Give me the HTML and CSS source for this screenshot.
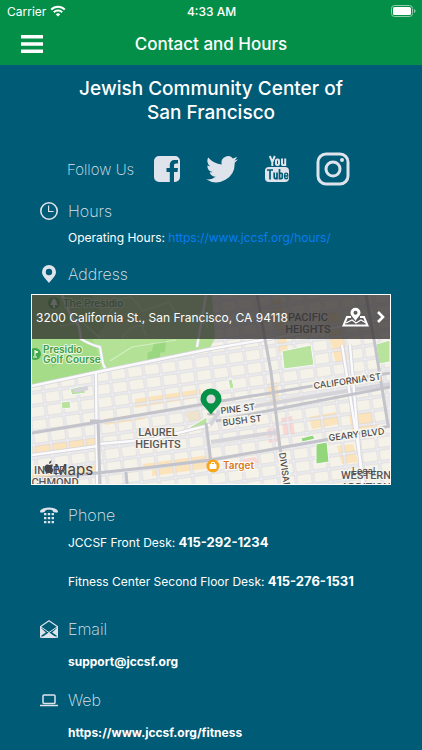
FILE: index.html
```html
<!DOCTYPE html>
<html lang="en">
<head>
    <meta charset="UTF-8">
    <meta name="viewport" content="width=device-width, initial-scale=1.0">
    <title>Contact and Hours</title>
    <link rel="stylesheet" href="styles.css">
</head>
<body>

    <header class="header">
        <div class="status-bar">
            <div class="carrier">
                <span>Carrier</span>
                <svg width="16" height="12" viewBox="0 0 16 12" fill="none" stroke="#fff" stroke-width="2">
                    <path d="M1.2 4.6a9.6 9.6 0 0 1 13.6 0"/>
                    <path d="M3.8 7.3a6 6 0 0 1 8.4 0"/>
                    <path d="M8 11.6L5.8 9.4a3.1 3.1 0 0 1 4.4 0z" fill="#fff" stroke="none"/>
                </svg>
            </div>
            <span class="time">4:33 AM</span>
            <div class="battery">
                <svg width="25" height="12" viewBox="0 0 25 12">
                    <rect x=".5" y=".5" width="21" height="11" rx="3" fill="none" stroke="#8fceab"/>
                    <rect x="2" y="2" width="18" height="8" rx="1.5" fill="#fff"/>
                    <path d="M23 4v4q1.500-.6 1.500-2T23 4z" fill="#8fceab"/>
                </svg>
            </div>
        </div>
        <nav class="nav-bar">
            <button class="menu-btn" aria-label="Menu">
                <svg width="22" height="18" viewBox="0 0 22 18" fill="#fff">
                    <path d="M0 0h22v3.500H0zM0 7.200h22v3.500H0zM0 14.500h22V18H0z"/>
                </svg>
            </button>
            <h1 class="nav-title">Contact and Hours</h1>
        </nav>
    </header>

    <main class="content">
        <h2 class="place-name">Jewish Community Center of San Francisco</h2>

        <div class="follow">
            <span class="label">Follow Us</span>
            <a href="#" aria-label="Facebook">
                <svg width="26" height="26" viewBox="0 0 26 26">
                    <path fill="#dfe3ec" d="M5 0h16a5 5 0 0 1 5 5v16a5 5 0 0 1-5 5h-1V16h3.500l.5-4h-4V9.500c0-1.300.6-2 2-2h2V4h-3c-3.600 0-5.200 2-5.200 5.200V12h-3.300v4h3.300v10H5a5 5 0 0 1-5-5V5a5 5 0 0 1 5-5z"/>
                </svg>
            </a>
            <a href="#" aria-label="Twitter">
                <svg width="32" height="27" viewBox="0 0 24 20">
                    <path fill="#dfe3ec" d="M24 2.400a10 10 0 0 1-2.800.8A4.900 4.900 0 0 0 23.300.5a10 10 0 0 1-3.100 1.200 4.900 4.900 0 0 0-8.400 4.500A14 14 0 0 1 1.700 1a4.900 4.900 0 0 0 1.500 6.600A5 5 0 0 1 1 7a4.900 4.900 0 0 0 3.900 4.900 5 5 0 0 1-2.200.1 4.900 4.900 0 0 0 4.600 3.400A9.900 9.900 0 0 1 0 17.400a14 14 0 0 0 21.500-12.500A10 10 0 0 0 24 2.400z"/>
                </svg>
            </a>
            <a href="#" aria-label="YouTube">
                <svg width="26" height="28" viewBox="0 0 26 28" fill="none" stroke-width="2">
                    <rect x="1" y="12" width="24" height="15" rx="4" fill="#dfe3ec"/>
                    <g stroke="#dfe3ec">
                        <path d="M5.800 1l2.500 6v4M10.800 1L8.300 7"/>
                        <rect x="12" y="4.500" width="3" height="5.600" rx="1.300"/>
                        <path d="M18 3.500v5.200q0 1.500 1.200 1.400 1.200 0 2-1.400M21.200 3.500V11"/>
                    </g>
                    <g stroke="#005b76" stroke-width="1.700">
                        <path d="M3 15h6M6 15v9.500M10.200 17.500v4.800q0 1.300 1 1.300t1.800-1.300M13 17.500v7"/>
                        <path d="M15.500 14v10.500M15.500 19q1-1 2-.7t.8 1.500v2.500q0 1.300-.8 1.400t-2-.8"/>
                        <path d="M20.700 21h3v-1.500q0-1.400-1.500-1.400t-1.500 1.400v2.700q0 1.500 1.500 1.500t1.500-1.500" stroke-width="1.400"/>
                    </g>
                </svg>
            </a>
            <a href="#" aria-label="Instagram">
                <svg width="34" height="34" viewBox="0 0 34 34" fill="none" stroke="#dfe3ec" stroke-width="3">
                    <rect x="2" y="2" width="30" height="30" rx="8"/>
                    <circle cx="17" cy="17" r="7"/>
                    <circle cx="26" cy="8" r="2" fill="#dfe3ec" stroke="none"/>
                </svg>
            </a>
        </div>

        <section class="hours">
            <h3 class="section-title">
                <svg width="18" height="18" viewBox="0 0 18 18" fill="none" stroke="#dfe3ec">
                    <circle cx="9" cy="9" r="8.200" stroke-width="1.600"/>
                    <path d="M8.600 3.500v6h5" stroke-width="1.200"/>
                </svg>
                Hours
            </h3>
            <p class="line">Operating Hours: <a class="hours-link" href="https://www.jccsf.org/hours/">https://www.jccsf.org/hours/</a></p>
        </section>

        <section class="address">
            <h3 class="section-title">
                <svg width="18" height="18" viewBox="0 0 18 18">
                    <path fill="#dfe3ec" fill-rule="evenodd" d="M9 0a7 7 0 0 1 7 7c0 3.500-3 6-7 11C5 13 2 10.500 2 7a7 7 0 0 1 7-7zm0 3.800a3.200 3.200 0 1 0 0 6.400 3.200 3.200 0 0 0 0-6.400z"/>
                </svg>
                Address
            </h3>
            <div class="map">
                <svg class="map-canvas" viewBox="32 295 358 189" preserveAspectRatio="xMidYMid slice">
                    <defs>
                        <pattern id="blocks" width="17" height="13" patternUnits="userSpaceOnUse" patternTransform="translate(97 421) rotate(-8)">
                            <path d="M0 2h17M2 0v13" stroke="#d3d3d8" stroke-width="2.800"/>
                            <path d="M0 2h17M2 0v13" stroke="#f1f1f5" stroke-width="1.400"/>
                        </pattern>
                    </defs>
                    <rect x="32" y="295" width="358" height="189" fill="#f5f2e9"/>

                    <!-- shopping blocks -->
                    <g fill="#fbe3bb">
                        <path d="M32 446l66-10v8l-66 10zM32 474l66-9v7l-66 9zM135 408l66-11v-8l-66 10zM152 470l58-9v7l-58 8zM271 300l10-1 7 52-10 2zM323 312l14-2 13 50-14 4zM309 417l27-5 3 12-27 5zM349 414l22-3 8 18-27 5zM333 340l12-2 4 20-12 2zM337 446l16-2 5 18-16 2zM143 464l66-9 1 5-66 9zM105 425l40-6v-6l-41 6zM267 384l10-2 3 22-9 2z"/>
                    </g>
                    <g fill="#fad6d4">
                        <path d="M281 418l11-2 3 18-11 2zM267 429l11-2 2 14-11 2zM239 460l16-3 5 6-16 2z"/>
                    </g>
                    <path d="M185 413l13-3 6 10-15 2z" fill="#eee3cc"/>

                    <rect x="32" y="295" width="358" height="189" fill="url(#blocks)"/>

                    <!-- parks -->
                    <path d="M32 295h180l3 43-5 10-108 22-22 5-48 10z" fill="#b3e296"/>
                    <path d="M32 338h60l10 25-4 8-66 13z" fill="#a5dc88"/>
                    <path d="M32 295h60l14 28-10 15H32z" fill="#96cf7d"/>
                    <g fill="#9bd680">
                        <path d="M154 343l12-3-1 12-14 2zM148 352l12-2v9l-13 2zM50 350l15 6-13 13z"/>
                    </g>
                    <g fill="#b7e39c" stroke="#f8f8fa">
                        <path d="M282 351l29-6 3 20-30 4zM376 344l14-4v22l-11 2zM228 380l4-1 2 9-4 1zM61 402l9-1 1 7-9 1zM70 389l12-3 4 7-14 2zM190 427l17-10v8l-15 6z"/>
                        <path d="M301 438l12-3 2 4-13 3zM316 444l11-2 2 20-13 2z" fill="#94d77a"/>
                    </g>
                    <g fill="none" stroke="#d3efc2" stroke-width="1.200">
                        <path d="M107 318l10-18 14-3 12 14 26-9 6 10M140 318l6 18M168 300l12 20 20-6 8 14M122 338q8-14 22-12"/>
                        <path d="M110 361l22-14 44-7M100 338l-18-16-22 4"/>
                    </g>
                    <path d="M62 295l8 19 9 12 2 13q10 6 19 8l3 17 3 6M206 295l-9 52" fill="none" stroke="#d9dcdf" stroke-width="3"/>
                    <path d="M62 295l8 19 9 12 2 13q10 6 19 8l3 17 3 6M206 295l-9 52" fill="none" stroke="#fafafc" stroke-width="2"/>

                    <!-- main streets -->
                    <g fill="none" stroke="#d4d4da" stroke-width="4">
                        <path d="M32 386l70-15 108-22 180-31M32 455l66-9M88 388l-14 3M96 372l1 112M350 345l12 139M342 345l22 139M99 444l55-5 56-14"/>
                        <path d="M210 425l9-13 171-28M211 442l67-10"/>
                    </g>
                    <g fill="none" stroke="#fbfbfd" stroke-width="2.400">
                        <path d="M32 386l70-15 108-22 180-31M32 455l66-9M96 372l1 112M350 345l12 139M342 345l22 139M99 444l55-5 56-14"/>
                    </g>
                    <g fill="none" stroke="#c3c3cb" stroke-width="3">
                        <path d="M32 433l66-11 106-18 186-31M216 421l174-34M90 421l8 0 2 63M32 479l65-6 56-6 58-7 68-12 51-9 60-13"/>
                        <path d="M257 295l14 77 9 76 8 36M366 295l9 50 13 80M206 423l5 40M126 472l1 12"/>
                    </g>

                    <!-- street and district names -->
                    <g class="street" stroke="#f8f5ec" stroke-width="3" paint-order="stroke">
                        <text x="314" y="389" transform="rotate(-8 314 389)">CALIFORNIA ST</text>
                        <text x="221" y="414" transform="rotate(-7 221 414)">PINE ST</text>
                        <text x="223" y="426" transform="rotate(-7 223 426)">BUSH ST</text>
                        <text x="329" y="441" transform="rotate(-7 329 441)">GEARY BLVD</text>
                        <text x="279" y="453" transform="rotate(82 279 453)">DIVISADERO</text>
                    </g>
                    <g class="district" stroke="#f8f5ec" stroke-width="2" paint-order="stroke">
                        <text x="308" y="321">PACIFIC</text>
                        <text x="308" y="333">HEIGHTS</text>
                        <text x="158" y="436">LAUREL</text>
                        <text x="158" y="448">HEIGHTS</text>
                        <text x="50" y="474">INNER</text>
                        <text x="50" y="486">RICHMOND</text>
                        <text x="366" y="479">WESTERN</text>
                        <text x="366" y="491">ADDITION</text>
                    </g>
                    <g class="poi" fill="#3f9e48" stroke="#e6f5dc" stroke-width="2" paint-order="stroke">
                        <text x="63" y="307">The Presidio</text>
                        <text x="43" y="353">Presidio</text>
                        <text x="43" y="363">Golf Course</text>
                    </g>
                    <circle cx="54" cy="303" r="6" fill="#43a94d"/>
                    <path d="M54 298l3 4h-1l2 3h-3v3h-2v-3h-3l2-3h-1z" fill="#fff"/>
                    <circle cx="35" cy="354" r="6" fill="#43a94d"/>
                    <path d="M35 350v6M35 351l3 1-3 1M33 357h4" stroke="#fff" fill="none"/>
                    <circle cx="213" cy="466" r="6.500" fill="#f9a51a"/>
                    <path d="M210 464.500h6v4h-6z" fill="#fff" stroke="#fff"/>
                    <path d="M211.500 464v-1.500h3v1.500" fill="none" stroke="#fff"/>
                    <text class="poi" x="223" y="469" fill="#d97823" stroke="#fff" stroke-width="2" paint-order="stroke">Target</text>
                    <g fill="#47454a">
                        <path d="M46 465c1.500-1 3 0 3.600 0s2-1 3.400 0c-1.500 1.500-1 4 .6 4.800-.8 2.400-2 4-3.300 3.400-.8-.3-1.400-.3-2 0-2.600.8-6.200-6-2.300-8.200zM49 464c0-2 1-3 2.500-3.400 0 2-1 3.200-2.500 3.400z"/>
                        <text class="maps-logo" x="54" y="475">Maps</text>
                        <text class="legal" x="352" y="474">Legal</text>
                    </g>

                    <!-- pin -->
                    <ellipse cx="211" cy="414" rx="4" ry="1.500" fill="#000" opacity=".2"/>
                    <path d="M211 388.500a10.500 10.500 0 0 1 10.500 10.500c0 5.500-5 8-10.500 15.500-5.500-7.500-10.500-10-10.500-15.500A10.500 10.500 0 0 1 211 388.500z" fill="#069149"/>
                    <circle cx="211" cy="399" r="4.500" fill="#dcdcdc"/>
                </svg>
                <a class="map-bar" href="#">
                    <span class="map-address">3200 California St., San Francisco, CA 94118</span>
                    <svg width="27" height="20" viewBox="0 0 27 20" fill="none" stroke="#fff" stroke-width="2">
                        <path d="M9 10H5L1.500 18.500h24L22 10h-4"/>
                        <path d="M4 16l6-3 4 3 5-3 5 3" stroke-width="1.200"/>
                        <path d="M13.500 14c-2.500-4-5-5.500-5-8.200a5 5 0 0 1 10 0c0 2.700-2.500 4.200-5 8.200z" fill="#fff" stroke="none"/>
                        <circle cx="13.500" cy="5.800" r="2" fill="#5e5d5a" stroke="none"/>
                    </svg>
                    <svg width="8" height="12" viewBox="0 0 8 12" fill="none" stroke="#fff" stroke-width="2.600">
                        <path d="M1 1l5 5-5 5"/>
                    </svg>
                </a>
            </div>
        </section>

        <section class="phone">
            <h3 class="section-title">
                <svg width="18" height="18" viewBox="0 0 18 18" fill="#dfe3ec">
                    <path d="M0 5.500C0 3.500 4 1.500 9 1.500s9 2 9 4c0 1.200-1 1.300-2 1.100l-2-.4c-1-.2-1.200-1.700-1.800-2-1.500-.5-4.900-.5-6.400 0-.6.3-.8 1.800-1.800 2l-2 .4C1 6.800 0 6.700 0 5.500z"/>
                    <path d="M4 7h2.400v2.200H4zM7.800 7h2.400v2.200H7.800zM11.600 7H14v2.200h-2.400zM4 11h2.400v2.200H4zM7.800 11h2.400v2.200H7.800zM11.600 11H14v2.200h-2.400zM4 15h2.400v2.200H4zM7.800 15h2.400v2.200H7.800zM11.600 15H14v2.200h-2.400z"/>
                </svg>
                Phone
            </h3>
            <p class="line">JCCSF Front Desk: <a href="tel:4152921234">415-292-1234</a></p>
            <p class="line">Fitness Center Second Floor Desk: <a href="tel:4152761531">415-276-1531</a></p>
        </section>

        <section class="email">
            <h3 class="section-title">
                <svg width="18" height="18" viewBox="0 0 18 18">
                    <path d="M.6 6.500L9 .8l8.400 5.700v10.700H.6z" fill="none" stroke="#dfe3ec" stroke-width="1.200" stroke-linejoin="round"/>
                    <path d="M0 7l5.800 5.500L0 16.500zM18 7l-5.800 5.500 5.800 4zM1 18l8-5.800L17 18z" fill="#dfe3ec"/>
                    <path d="M1 7l8 5.500L17 7" fill="none" stroke="#dfe3ec"/>
                </svg>
                Email
            </h3>
            <p class="line"><a href="mailto:support@jccsf.org">support@jccsf.org</a></p>
        </section>

        <section class="web">
            <h3 class="section-title">
                <svg width="18" height="18" viewBox="0 0 18 18" fill="none" stroke="#dfe3ec" stroke-width="1.500">
                    <rect x="3" y="4" width="12" height="8.500" rx="1"/>
                    <path d="M0 14.500h18"/>
                </svg>
                Web
            </h3>
            <p class="line"><a href="https://www.jccsf.org/fitness">https://www.jccsf.org/fitness</a></p>
        </section>
    </main>

</body>
</html>
```
FILE: styles.css
```css
* {
    box-sizing: border-box;
}
body {
    margin: 0;
    background-color: #005b76;
    color: white;
    font-family: Inter, "Liberation Sans", sans-serif;
}
h1, h2, h3, p {
    margin: 0;
}
svg {
    display: block;
    flex-shrink: 0;
}
a {
    color: inherit;
    text-decoration: none;
}
.header {
    background-color: #048f49;
}
.status-bar {
    display: grid;
    grid-template-columns: 1fr auto 1fr;
    align-items: center;
    height: 22px;
    padding: 0 6px 0 7px;
    font-size: 12px;
}
.carrier {
    display: flex;
    align-items: center;
    gap: 4px;
}
.time {
    font-weight: 500;
}
.battery {
    justify-self: end;
}
.nav-bar {
    display: grid;
    grid-template-columns: 64px 1fr 64px;
    align-items: center;
    height: 43px;
}
.menu-btn {
    padding: 0 21px;
    border: none;
    background: none;
    cursor: pointer;
}
.nav-title {
    font-size: 17px;
    font-weight: 500;
    line-height: 22px;
    text-align: center;
}
.content {
    padding: 12px 31px 10px;
}
.place-name {
    max-width: 300px;
    margin: 0 auto;
    font-size: 19px;
    font-weight: 500;
    line-height: 24px;
    text-align: center;
}
.follow {
    display: flex;
    align-items: center;
    gap: 26px;
    margin: 27px 0 13px;
    padding-left: 36px;
}
.label {
    margin-right: -6px;
    color: #dfe3ec;
    font-size: 15px;
    font-weight: 200;
}
.section-title {
    display: flex;
    align-items: center;
    gap: 10px;
    padding-left: 9px;
    color: #dfe3ec;
    font-size: 16px;
    font-weight: 200;
    line-height: 24px;
}
.line {
    padding-left: 37px;
    font-size: 12px;
    line-height: 18px;
}
.line a {
    font-weight: 700;
}
.hours .line {
    margin: 6px 0 15px;
}
.line .hours-link {
    color: #087bf0;
    font-weight: 400;
}
.map {
    position: relative;
    margin: 8px 0 18px;
    border: 1px solid white;
    overflow: hidden;
}
.map-canvas {
    width: 100%;
    height: 189px;
}
.map-bar {
    position: absolute;
    top: 0;
    left: 0;
    right: 0;
    display: flex;
    align-items: center;
    gap: 8px;
    height: 44px;
    padding: 0 5px 0 4px;
    background-color: rgba(52, 50, 50, 0.77);
}
.map-address {
    flex: 1;
    font-size: 12px;
}
.street {
    fill: #4c4b4e;
    font-size: 9px;
    font-weight: 500;
}
.district {
    fill: #59575a;
    font-family: Roboto, sans-serif;
    font-size: 11px;
    font-weight: 500;
    text-anchor: middle;
}
.poi {
    font-size: 10px;
    font-weight: 600;
}
.maps-logo {
    font-size: 15px;
}
.legal {
    font-size: 9px;
}
.phone .line {
    margin: 6px 0 20px;
}
.phone .line:last-child {
    margin-bottom: 26px;
}
.phone .line a {
    font-size: 13px;
}
.email .line,
.web .line {
    margin: 12px 0 17px;
}
.web .line {
    margin-bottom: 0;
}
```
